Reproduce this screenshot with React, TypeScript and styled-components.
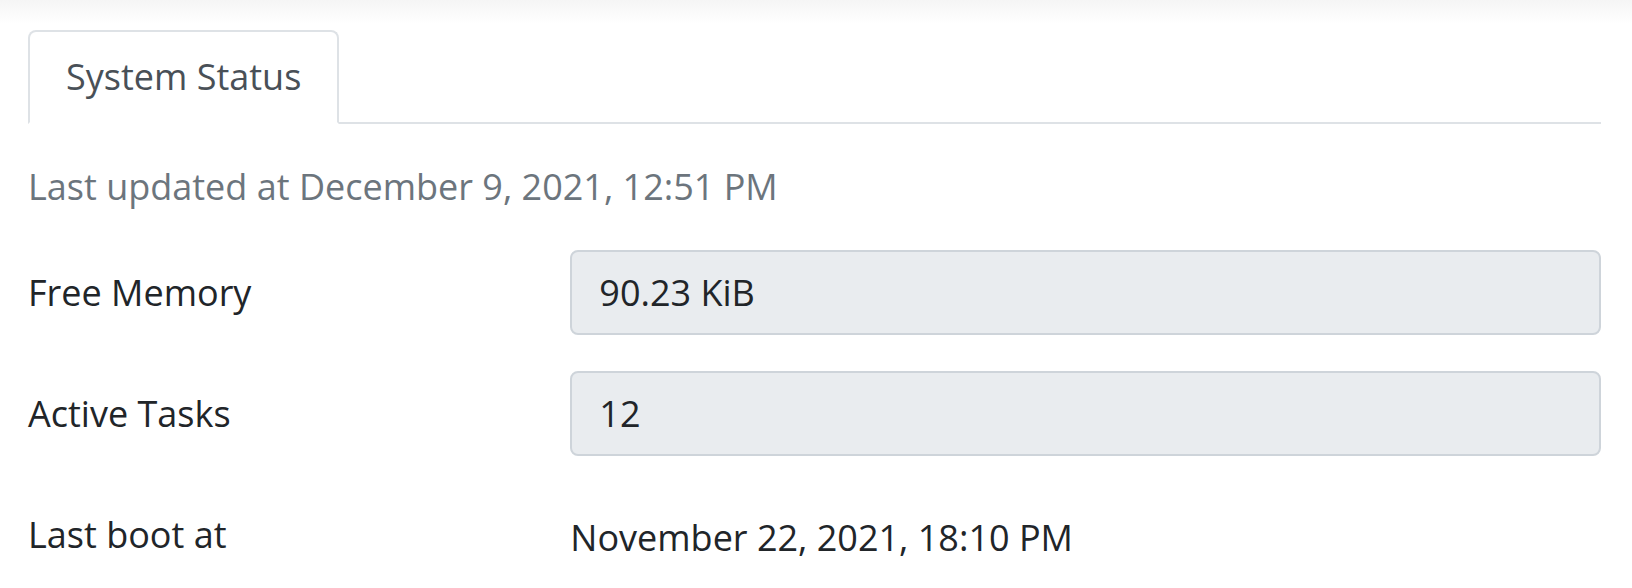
import React from "react";
import styled, { createGlobalStyle } from "styled-components";

const GlobalStyle = createGlobalStyle`
  html, body {
    margin: 0;
    padding: 0;
    background: #ffffff;
  }
  body {
    font-family: "Open Sans", "Noto Sans", sans-serif;
    font-size: 36px;
    line-height: 54px;
    color: #212529;
  }
  * { box-sizing: border-box; }
`;

const TopShade = styled.div`
  height: 24px;
  background: linear-gradient(#f5f5f5, #ffffff);
`;

const Page = styled.main`
  padding: 6px 31px 0 28px;
`;

const TabList = styled.ul`
  display: flex;
  list-style: none;
  margin: 0;
  padding: 0;
  border-bottom: 2px solid #dee2e6;
`;

const Tab = styled.li<{ $active?: boolean }>`
  margin-bottom: -2px;
  padding: 18px 36px;
  border: 2px solid ${(p) => (p.$active ? "#dee2e6" : "transparent")};
  border-bottom-color: ${(p) => (p.$active ? "#ffffff" : "transparent")};
  border-top-left-radius: 8px;
  border-top-right-radius: 8px;
  background: #ffffff;
  color: #495057;
  line-height: 54px;
`;

const Updated = styled.p`
  margin: 36px 0 36px;
  color: #6c757d;
`;

const Field = styled.div`
  display: grid;
  grid-template-columns: calc((100% + 60px) / 3 - 62px) 1fr;
  column-gap: 60px;
  margin-bottom: 36px;
`;

const Label = styled.label<{ $pad?: number }>`
  padding-top: ${(p) => p.$pad ?? 15.5}px;
  color: #212529;
`;

const ReadOnlyBox = styled.div`
  height: 85px;
  padding: 13.5px 27px;
  border: 2px solid #ced4da;
  border-radius: 8px;
  background: #e9ecef;
  color: #212529;
`;

const PlainValue = styled.div`
  padding-top: 19px;
  color: #212529;
`;

export default function App() {
  return (
    <>
      <GlobalStyle />
      <TopShade />
      <Page>
        <TabList>
          <Tab $active>System Status</Tab>
        </TabList>
        <Updated>Last updated at December 9, 2021, 12:51 PM</Updated>
        <Field>
          <Label>Free Memory</Label>
          <ReadOnlyBox>90.23 KiB</ReadOnlyBox>
        </Field>
        <Field>
          <Label>Active Tasks</Label>
          <ReadOnlyBox>12</ReadOnlyBox>
        </Field>
        <Field>
          <Label $pad={16}>Last boot at</Label>
          <PlainValue>November 22, 2021, 18:10 PM</PlainValue>
        </Field>
      </Page>
    </>
  );
}
